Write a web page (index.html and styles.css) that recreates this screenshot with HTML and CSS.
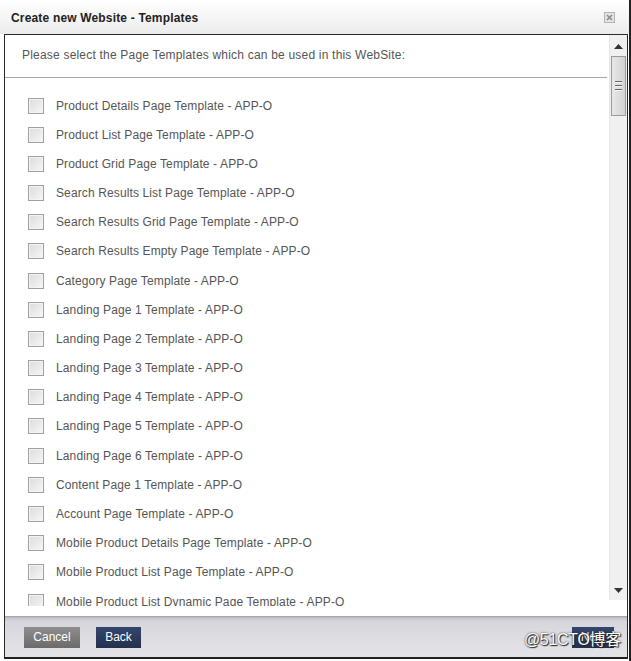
FILE: index.html
```html
<!DOCTYPE html>
<html>
<head>
<meta charset="utf-8">
<link rel="stylesheet" href="styles.css">
</head>
<body>
<div class="dialog">
  <div class="titlebar">
    <span class="title">Create new Website - Templates</span>
    <span class="close">
      <svg width="11" height="11" viewBox="0 0 11 11"><rect x="0.5" y="0.5" width="10" height="10" fill="#e4e4e4" stroke="#b4b4b4"/><path d="M3 3 L8 8 M8 3 L3 8" stroke="#8a8a8a" stroke-width="1.6"/></svg>
    </span>
  </div>
  <div class="frame">
    <div class="body">
      <div class="viewport">
        <div class="scrollpane">
          <div class="intro">Please select the Page Templates which can be used in this WebSite:</div>
          <ul class="list">
            <li><span class="cb"></span>Product Details Page Template - APP-O</li>
            <li><span class="cb"></span>Product List Page Template - APP-O</li>
            <li><span class="cb"></span>Product Grid Page Template - APP-O</li>
            <li><span class="cb"></span>Search Results List Page Template - APP-O</li>
            <li><span class="cb"></span>Search Results Grid Page Template - APP-O</li>
            <li><span class="cb"></span>Search Results Empty Page Template - APP-O</li>
            <li><span class="cb"></span>Category Page Template - APP-O</li>
            <li><span class="cb"></span>Landing Page 1 Template - APP-O</li>
            <li><span class="cb"></span>Landing Page 2 Template - APP-O</li>
            <li><span class="cb"></span>Landing Page 3 Template - APP-O</li>
            <li><span class="cb"></span>Landing Page 4 Template - APP-O</li>
            <li><span class="cb"></span>Landing Page 5 Template - APP-O</li>
            <li><span class="cb"></span>Landing Page 6 Template - APP-O</li>
            <li><span class="cb"></span>Content Page 1 Template - APP-O</li>
            <li><span class="cb"></span>Account Page Template - APP-O</li>
            <li><span class="cb"></span>Mobile Product Details Page Template - APP-O</li>
            <li><span class="cb"></span>Mobile Product List Page Template - APP-O</li>
            <li><span class="cb"></span>Mobile Product List Dynamic Page Template - APP-O</li>
          </ul>
        </div>
        <div class="scrollbar">
          <div class="arrow up"><svg width="9" height="5" viewBox="0 0 9 5"><path d="M0 5 L4.5 0 L9 5 Z" fill="#333"/></svg></div>
          <div class="track">
            <div class="thumb"><span class="grip"></span><span class="grip"></span><span class="grip"></span></div>
          </div>
          <div class="arrow down"><svg width="9" height="5" viewBox="0 0 9 5"><path d="M0 0 L4.5 5 L9 0 Z" fill="#333"/></svg></div>
        </div>
      </div>
    </div>
    <div class="footer">
      <button class="btn cancel">Cancel</button>
      <button class="btn back">Back</button>
      <span class="spacer"></span>
      <button class="btn next">Next</button>
    </div>
  </div>
  <div class="watermark">@51CTO博客</div>
</div>
</body>
</html>
```
FILE: styles.css
```css
html, body {
  margin: 0;
  padding: 0;
  background: #fff;
}
body {
  width: 631px;
  height: 661px;
  overflow: hidden;
  font-family: "Liberation Sans", Arial, sans-serif;
  font-size: 12px;
}
.dialog {
  position: relative;
  width: 631px;
  height: 661px;
  box-sizing: border-box;
  border-right: 2px solid #222;
  padding-bottom: 2px;
  background: #fff;
  display: flex;
  flex-direction: column;
}
.titlebar {
  height: 34px;
  flex: none;
  display: flex;
  align-items: center;
  padding: 2px 14px 0 11px;
  background: linear-gradient(#ffffff, #f7f7f7 40%, #ececec);
  box-sizing: border-box;
}
.title {
  flex: 1;
  color: #222;
  font-size: 12px;
  font-weight: bold;
  letter-spacing: 0.17px;
}
.close {
  display: flex;
  margin-top: -1px;
}
.frame {
  flex: 1;
  margin-left: 4px;
  margin-right: 1px;
  border: 1px solid #2a2a2a;
  border-bottom: 2px solid #222;
  display: flex;
  flex-direction: column;
  min-height: 0;
}
.body {
  flex: 1;
  min-height: 0;
  background: #fff;
  padding-bottom: 10px;
  display: flex;
  flex-direction: column;
}
.viewport {
  flex: 1;
  min-height: 0;
  display: flex;
}
.scrollpane {
  flex: 1;
  overflow: hidden;
}
.intro {
  height: 43px;
  box-sizing: border-box;
  padding: 13px 0 0 17px;
  color: #555;
  border-bottom: 1px solid #a8a8a8;
  margin-right: 2px;
  letter-spacing: 0.2px;
}
.list {
  list-style: none;
  margin: 0;
  padding: 13px 0 0 23px;
}
.list li {
  height: 29.18px;
  display: flex;
  align-items: center;
  color: #555;
  white-space: nowrap;
  letter-spacing: 0.12px;
}
.cb {
  width: 14px;
  height: 14px;
  border: 1px solid #a0a0a0;
  background: linear-gradient(135deg, #dcdcdc, #f6f6f6);
  box-shadow: inset 0 0 0 1px #f4f4f4;
  margin-right: 12px;
  flex: none;
}
.scrollbar {
  width: 17px;
  flex: none;
  background: #f0f0f0;
  display: flex;
  flex-direction: column;
  border-left: 1px solid #e6e6e6;
  margin-bottom: 6px;
}
.arrow {
  height: 19px;
  display: flex;
  align-items: center;
  justify-content: center;
}
.arrow.up { padding-top: 2px; }
.track {
  flex: 1;
}
.thumb {
  margin: 0 1px;
  height: 60px;
  border: 1px solid #9a9a9a;
  background: linear-gradient(90deg, #e8e8e8, #d2d2d2);
  box-sizing: border-box;
  display: flex;
  flex-direction: column;
  align-items: center;
  justify-content: center;
  gap: 2px;
}
.grip {
  width: 7px;
  height: 1px;
  background: #666;
  border-bottom: 1px solid #f4f4f4;
}
.footer {
  height: 41px;
  flex: none;
  display: flex;
  align-items: center;
  padding: 1px 13px 0 19px;
  background: linear-gradient(#9c9ca2 0, #c6c6cc 2px, #d6d6dc 6px, #e4e4e8 100%);
  gap: 16px;
  box-sizing: border-box;
}
.spacer { flex: 1; }
.btn {
  height: 21px;
  border: none;
  padding: 0;
  color: #fff;
  font-family: "Liberation Sans", Arial, sans-serif;
  font-size: 12px;
}
.cancel {
  width: 56px;
  background: linear-gradient(#8e8e8e, #6a6a6a);
}
.back {
  width: 45px;
  background: linear-gradient(#35466c, #24304e);
}
.next {
  width: 42px;
  background: linear-gradient(#35466c, #24304e);
}
.watermark {
  position: absolute;
  right: 8px;
  bottom: 11px;
  font-family: "Liberation Sans", "Noto Sans CJK SC", sans-serif;
  font-size: 16px;
  color: #fff;
  text-shadow: 0 0 2px #222, 1px 1px 1px #222;
  letter-spacing: -0.3px;
}
```
